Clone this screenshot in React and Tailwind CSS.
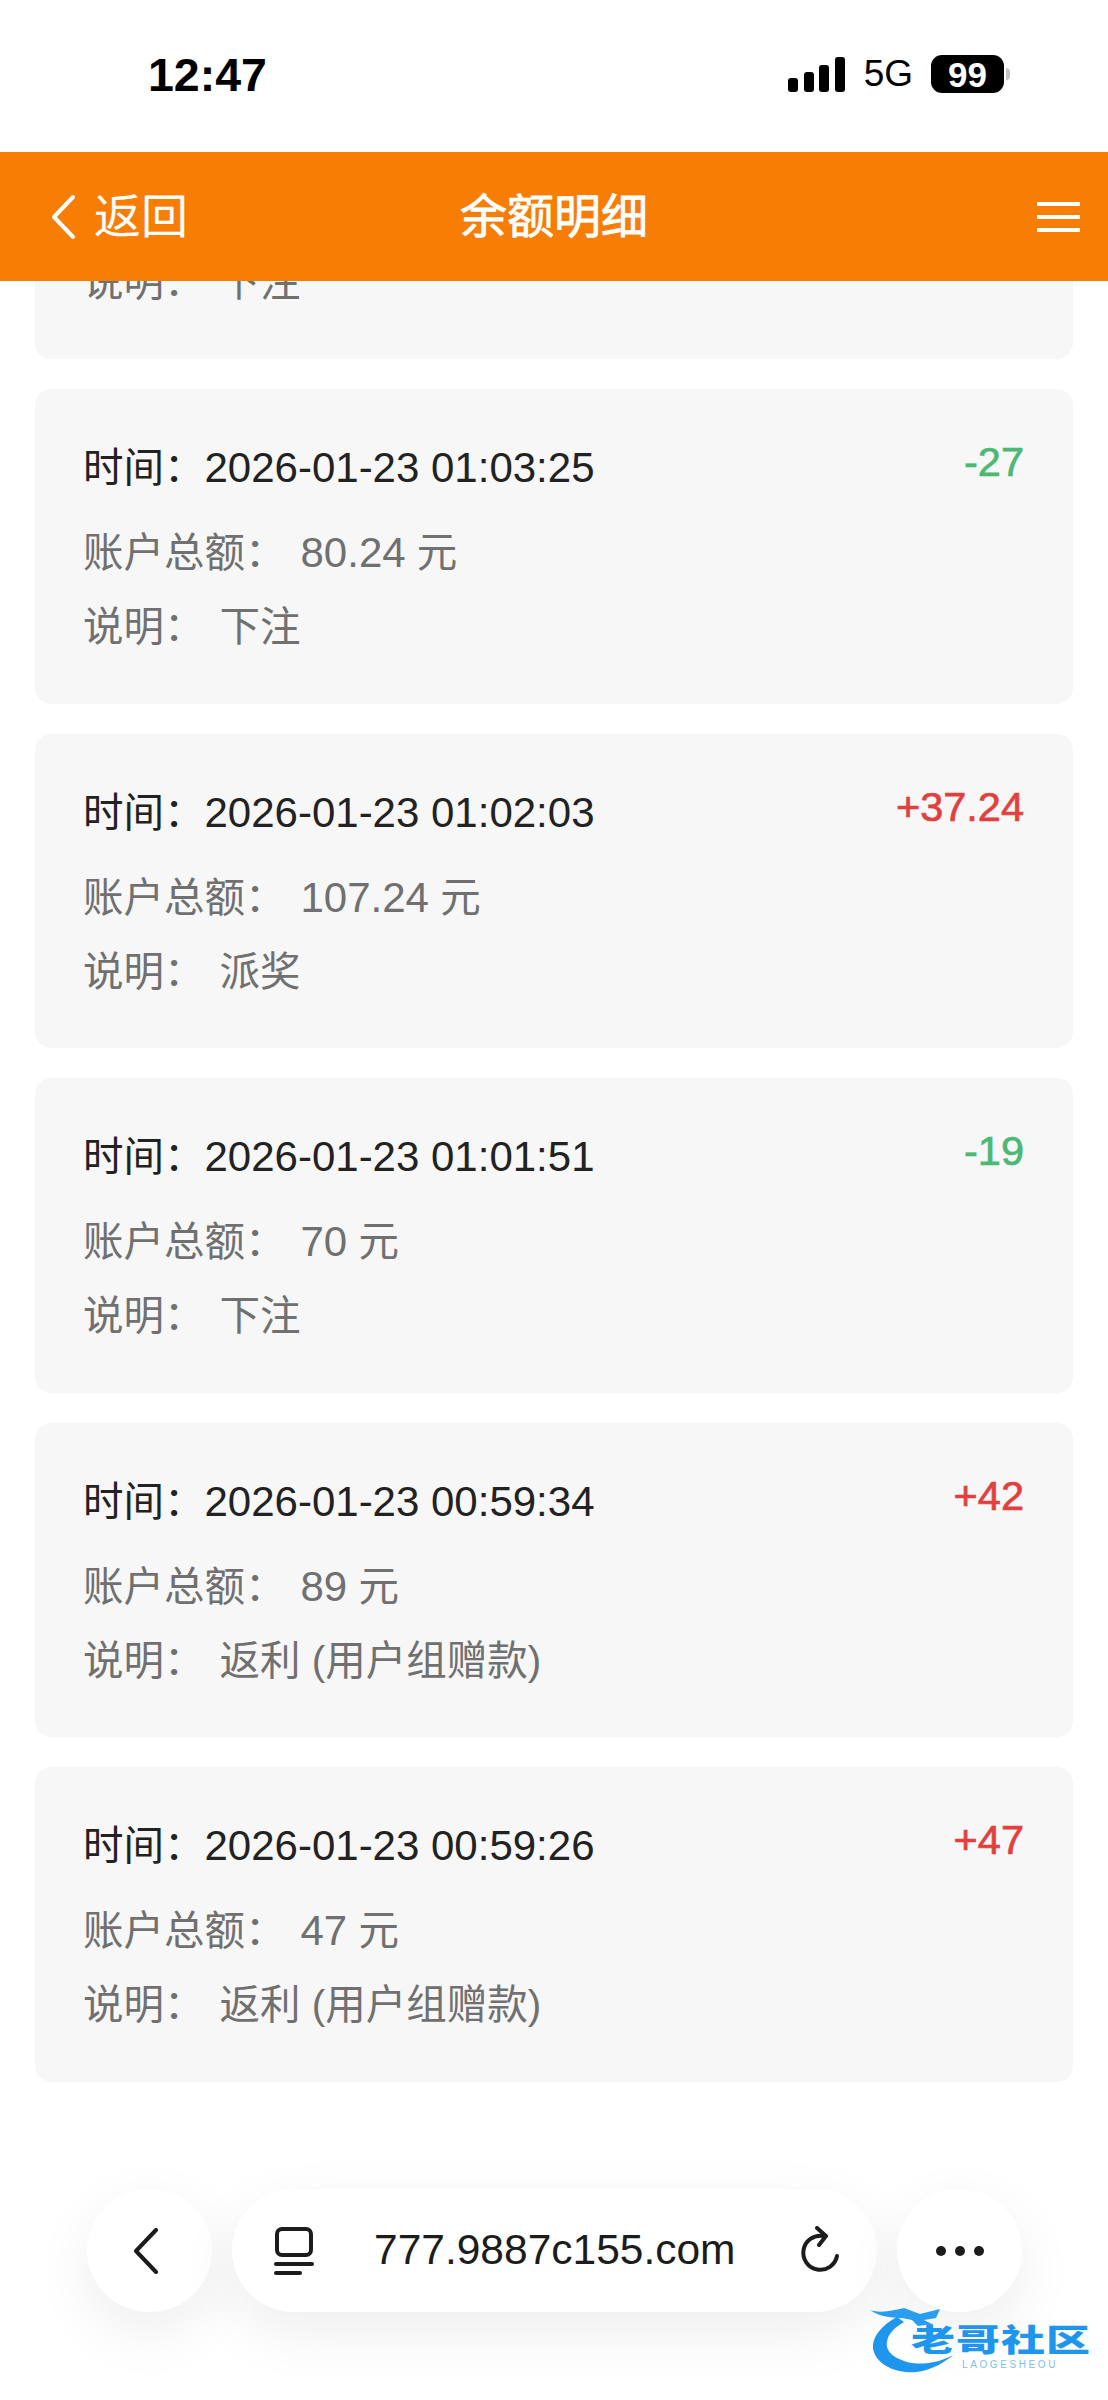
import React from "react";

const records = [
  { time: "2026-01-23 01:03:25", total: "80.24", note: "下注", amount: "-27" },
  { time: "2026-01-23 01:02:03", total: "107.24", note: "派奖", amount: "+37.24" },
  { time: "2026-01-23 01:01:51", total: "70", note: "下注", amount: "-19" },
  { time: "2026-01-23 00:59:34", total: "89", note: "返利 (用户组赠款)", amount: "+42" },
  { time: "2026-01-23 00:59:26", total: "47", note: "返利 (用户组赠款)", amount: "+47" },
];

const StatusBar = () => (
  <div className="flex h-[152px] items-start justify-between bg-white pt-[49px] pl-[148px] pr-[98px]">
    <span className="text-[46.5px] leading-[52px] font-bold text-black">12:47</span>
    <div className="flex items-center pt-[6px]">
      {/* Signal */}
      <div className="flex items-end gap-[5.5px]">
        <span className="h-[14px] w-[10px] rounded-[3px] bg-black" />
        <span className="h-[20px] w-[10px] rounded-[3px] bg-black" />
        <span className="h-[27px] w-[10px] rounded-[3px] bg-black" />
        <span className="h-[35px] w-[10px] rounded-[3px] bg-black" />
      </div>
      <span className="ml-[19px] text-[37px] leading-[38px] text-black">5G</span>
      {/* Battery */}
      <div className="ml-[18px] flex h-[38px] w-[73px] items-center justify-center rounded-[11px] bg-black text-[35px] leading-none font-bold text-white">
        99
      </div>
      <span className="ml-[2px] h-[12px] w-[4px] rounded-r-full bg-[#c4c4c4]" />
    </div>
  </div>
);

const Header = () => (
  <div className="relative flex h-[129px] items-center justify-between bg-[#f77d05] pl-[50px] pr-[28px] text-white">
    <div className="flex items-center">
      <svg width="26" height="46" viewBox="0 0 26 46" fill="none" stroke="white" strokeWidth="4" strokeLinecap="round" strokeLinejoin="round">
        <path d="M23 3 L4 23 L23 43" />
      </svg>
      <span className="ml-[18px] text-[47px] leading-none">返回</span>
    </div>
    <span className="absolute left-0 right-0 text-center text-[47px] leading-none [-webkit-text-stroke:0.8px_white]">余额明细</span>
    <div className="flex w-[43px] flex-col gap-[9px]">
      <span className="h-[4px] bg-white" />
      <span className="h-[4px] bg-white" />
      <span className="h-[4px] bg-white" />
    </div>
  </div>
);

// the card scrolled under the header, only its last row still shows
const ClippedCard = () => (
  <div className="h-[78px] shrink-0 overflow-hidden rounded-b-2xl bg-[#f7f7f7] pl-[48px]">
    <p className="-mt-[23px] text-[40.5px] leading-[48px] text-[#707070]">
      说明：<span className="ml-[15px]">下注</span>
    </p>
  </div>
);

const RecordCard = ({ record }) => (
  <div className="flex h-[314.5px] shrink-0 justify-between rounded-2xl bg-[#f7f7f7] pl-[48px] pr-[49px]">
    <div className="pt-[55px]">
      <p className="text-[40.5px] leading-[48px] text-[#222222]">
        时间：<span className="text-[42px]">{record.time}</span>
      </p>
      <p className="mt-[37px] text-[40.5px] leading-[48px] text-[#707070]">
        账户总额：<span className="ml-[15px] text-[42px]">{record.total}</span> 元
      </p>
      <p className="mt-[26px] text-[40.5px] leading-[48px] text-[#707070]">
        说明：<span className="ml-[15px]">{record.note}</span>
      </p>
    </div>
    <span className={`pt-[49px] text-[41.5px] leading-[48px] [-webkit-text-stroke:0.7px_currentColor] ${record.amount.startsWith("+") ? "text-[#e2403f]" : "text-[#4db873]"}`}>
      {record.amount}
    </span>
  </div>
);

const BrowserBar = () => (
  <div className="absolute left-[87px] top-[2189px] flex items-center gap-[20px]">
    <button className="flex h-[123px] w-[125px] items-center justify-center rounded-full bg-white pr-[6px] shadow-[0_20px_60px_rgba(0,0,0,0.07)]">
      <svg width="30" height="46" viewBox="0 0 30 46" fill="none" stroke="#1c1c1c" strokeWidth="4" strokeLinecap="round" strokeLinejoin="round">
        <path d="M24 2 L4 23 L24 44" />
      </svg>
    </button>
    <div className="flex h-[123px] w-[645px] items-center rounded-full bg-white pl-[42px] pr-[36px] shadow-[0_20px_60px_rgba(0,0,0,0.07)]">
      <svg width="40" height="48" viewBox="0 0 40 48" fill="none" stroke="#1c1c1c" strokeWidth="4" strokeLinecap="round">
        <rect x="3" y="2" width="34" height="26" rx="5" />
        <path d="M2 37 H38" />
        <path d="M2 46 H26" />
      </svg>
      <span className="ml-[60px] flex-1 text-[42.5px] leading-none text-[#1c1c1c]">777.9887c155.com</span>
      <svg width="42" height="50" viewBox="0 0 42 50" fill="none" stroke="#1c1c1c" strokeWidth="4" strokeLinecap="round" strokeLinejoin="round">
        <path d="M24 10 A17 17 0 1 0 38 30" />
        <path d="M18 2 L27 10 L20 19" />
      </svg>
    </div>
    <button className="flex h-[123px] w-[125px] items-center justify-center gap-[9px] rounded-full bg-white shadow-[0_20px_60px_rgba(0,0,0,0.07)]">
      <span className="h-[10px] w-[10px] rounded-full bg-[#1c1c1c]" />
      <span className="h-[10px] w-[10px] rounded-full bg-[#1c1c1c]" />
      <span className="h-[10px] w-[10px] rounded-full bg-[#1c1c1c]" />
    </button>
  </div>
);

const Watermark = () => (
  <div className="absolute left-[870px] top-[2304px] h-[84px] w-[225px]">
    <svg className="absolute left-0 top-0" width="100" height="74" viewBox="0 0 100 74" fill="none">
      <path d="M27 13 C10 22 2 34 3 44 C5 60 25 70 47 68 C62 66 75 58 83 51 C70 58 55 61 42 59 C26 56 15 48 17 38 C18 30 24 24 34 18 Z" fill="#1e96ee" />
      <path d="M0 6 C12 10 24 6 34 4 L50 10 L70 5 L66 14 L54 16 L62 20 L48 22 L42 16 L32 14 C20 14 8 12 0 6 Z" fill="#2a9df0" />
    </svg>
    <span className="absolute left-[41px] top-[21px] origin-top scale-y-[0.7] whitespace-nowrap text-[44px] leading-none font-black tracking-[1px] text-[#1e96ee]">老哥社区</span>
    <span className="absolute left-[92px] top-[55px] whitespace-nowrap text-[10px] leading-[12px] tracking-[2.6px] text-[#7dbdf0]">LAOGESHEOU</span>
  </div>
);

export default function App() {
  return (
    <div className="relative h-[2400px] overflow-hidden bg-white font-['Liberation_Sans','Noto_Sans_CJK_SC',sans-serif]">
      <StatusBar />
      <Header />
      <div className="flex flex-col gap-[30px] px-[35px]">
        <ClippedCard />
        {records.map((record) => (
          <RecordCard key={record.time} record={record} />
        ))}
      </div>
      <BrowserBar />
      <Watermark />
    </div>
  );
}
